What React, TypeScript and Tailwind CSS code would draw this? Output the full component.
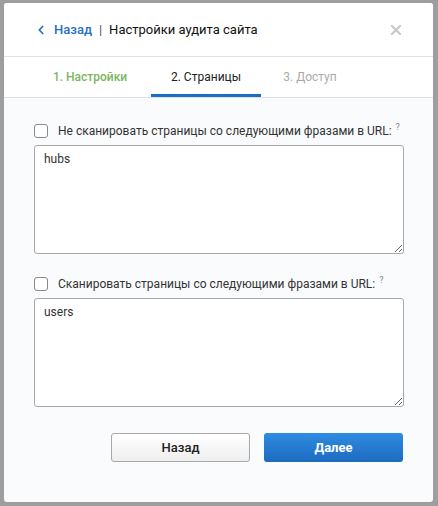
import { ChevronLeft, X } from 'lucide-react';

function Field({ label, value }: { label: string; value: string }) {
  return (
    <div>
      <label className="flex items-center h-[14px]">
        <span className="w-[14px] h-[14px] rounded-[3px] border border-[#8a8a8a] bg-white" />
        <span className="ml-[10px] text-[12px] text-[#333]">{label}</span>
        <span className="ml-[4px] -mt-[8px] text-[9px] leading-none text-[#888]">?</span>
      </label>
      <textarea
        defaultValue={value}
        className="mt-[7px] block w-[370px] h-[109px] rounded-[3px] border border-[#a8a8a8] bg-white px-[9px] py-[4px] text-[12px] text-[#333] outline-none"
      />
    </div>
  );
}

export default function App() {
  return (
    <div className="w-[438px] h-[506px] bg-[#9e9e9e] pl-[4px] pt-[3px] overflow-hidden" style={{ fontFamily: 'Roboto, "Noto Sans", sans-serif' }}>
      <div className="w-[429px] h-[499px] bg-[#fafbfd] rounded-[3px] overflow-hidden flex flex-col">
        <div className="bg-white h-[54px] flex items-center pl-[30px] pr-[29px] border-b border-[#dde1e8]">
          <ChevronLeft size={14} strokeWidth={3} className="text-[#1f6fc5]" />
          <span className="ml-[6px] text-[13px] text-[#1f6fc5] font-medium">Назад</span>
          <span className="mx-[7px] text-[13px] text-[#555]">|</span>
          <span className="text-[13px] text-[#111]">Настройки аудита сайта</span>
          <X size={16} strokeWidth={3.5} className="ml-auto text-[#c9c9c9]" />
        </div>
        <div className="bg-white h-[41px] flex items-stretch pl-[25px] border-b border-[#dde1e8]">
          <div className="w-[122px] flex items-center justify-center text-[12px] font-medium text-[#7bb65f]">1. Настройки</div>
          <div className="w-[110px] flex items-center justify-center text-[12px] text-[#222] border-b-[3px] border-[#1a6fc4] pt-[3px]">2. Страницы</div>
          <div className="w-[98px] flex items-center justify-center text-[12px] text-[#aaa]">3. Доступ</div>
        </div>
        <div className="flex-1 flex flex-col px-[30px] pt-[26px]">
          <Field label="Не сканировать страницы со следующими фразами в URL:" value="hubs" />
          <div className="h-[23px]" />
          <Field label="Сканировать страницы со следующими фразами в URL:" value="users" />
          <div className="mt-[26px] flex justify-end gap-[14px]">
            <button className="w-[139px] h-[29px] rounded-[3px] border border-[#a8a8a8] bg-gradient-to-b from-white to-[#eeeeee] text-[13px] font-medium text-[#222]">
              Назад
            </button>
            <button className="w-[139px] h-[29px] rounded-[3px] bg-gradient-to-b from-[#2e8ce2] to-[#1d6bbf] text-[13px] font-bold text-white">
              Далее
            </button>
          </div>
        </div>
      </div>
    </div>
  );
}
